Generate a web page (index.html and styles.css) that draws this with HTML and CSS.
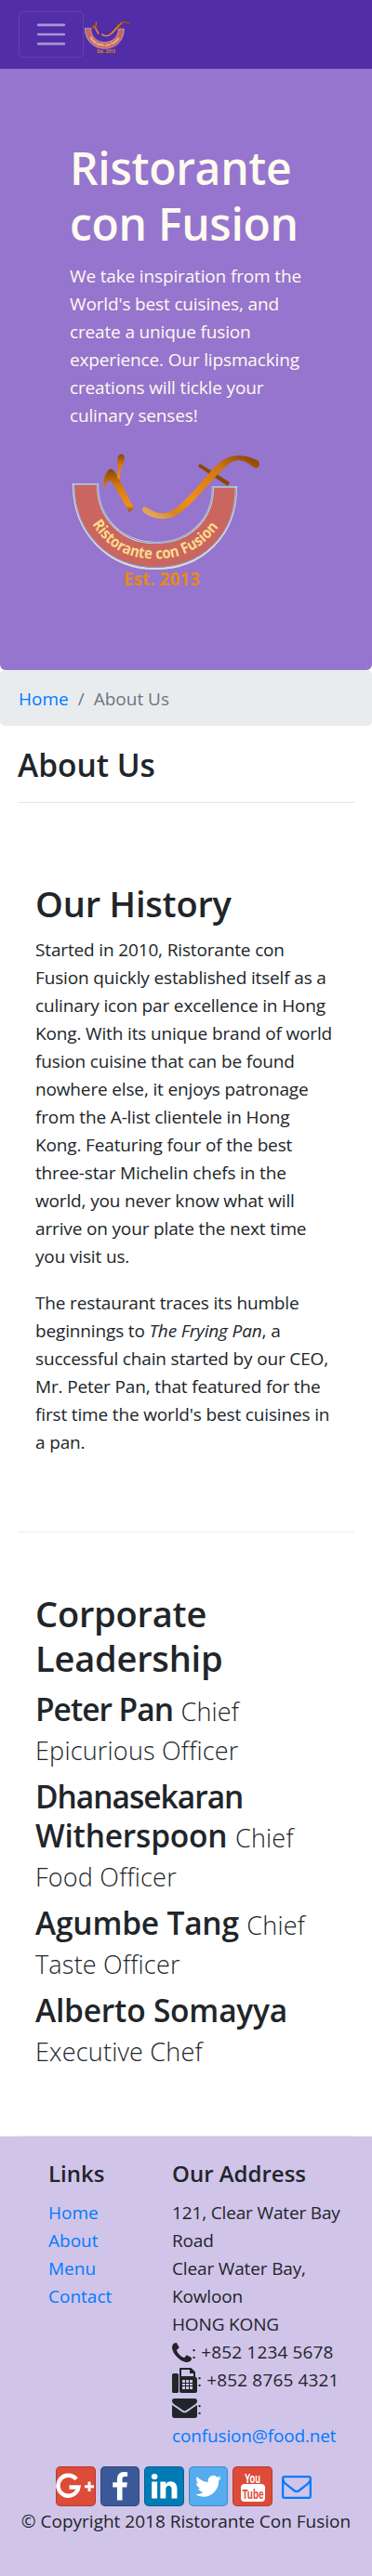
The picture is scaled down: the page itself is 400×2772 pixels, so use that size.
FILE: index.html
```html
<!DOCTYPE html>
<html lang="en">
<head>
<meta charset="utf-8">
<title>Ristorante Con Fusion: About Us</title>
<link rel="stylesheet" href="styles.css">
</head>
<body>
<svg width="0" height="0" class="defs" aria-hidden="true">
  <defs>
    <linearGradient id="gold" x1="0" y1="1" x2="1" y2="0"><stop offset="0" stop-color="#e9bb85"/><stop offset=".18" stop-color="#d9831c"/><stop offset=".35" stop-color="#f09018"/><stop offset=".75" stop-color="#cc7410"/><stop offset="1" stop-color="#7c3f00"/></linearGradient>
    <linearGradient id="amber" x1="0" y1="0" x2="0" y2="1"><stop offset="0" stop-color="#8a4700"/><stop offset=".4" stop-color="#d87a0c"/><stop offset=".85" stop-color="#f09018"/><stop offset="1" stop-color="#8a4a08"/></linearGradient>
    <symbol id="logo" viewBox="0 0 205 150">
      <path d="M4 35H30C30 72 56 98 92 98S154 74 154 38H179C179 91 142 126 92 126S4 88 4 35Z" fill="#cb655f" stroke="#ddd6dc" stroke-width="2.2"/>
      <path d="M4 35H30C30 72 56 98 92 98S154 74 154 38H179" fill="none" stroke="#71a0d2" stroke-width="1"/>
      <path d="M4.500 36C5 88 42 124.500 92 124.500S178 90 179 39" fill="none" stroke="#71a0d2" stroke-width="1"/>
      <path d="M37 40C35 32 38 22 43 19C46 18 48 21 51 26L69 61L64 65L45 32C41 30 39 33 37 40Z" fill="url(#amber)"/>
      <path d="M51 27C53 16 50 9 52 5C55 1 59 3 59 7C58 13 53 19 54 33Z" fill="url(#amber)"/>
      <path d="M138 16L140 13L172 33L170 37Z" fill="#8a4700"/>
      <path d="M79 65C77 60 79 58 83 60C91 65 97 68 106 65C122 60 146 25 161 12C174 1 190 3 203 10C205 15 203 19 198 17C190 11 182 6 173 12C157 23 134 57 114 69C101 75 88 72 79 65Z" fill="url(#gold)"/>
      <path id="arc" d="M24 78C40 103 61 115.500 92 115.500S147 102 165 74" fill="none"/>
      <text class="logo-band"><textPath href="#arc" textLength="161" lengthAdjust="spacingAndGlyphs">Ristorante con Fusion</textPath></text>
      <text class="logo-est" x="58" y="144" textLength="82" lengthAdjust="spacingAndGlyphs">Est. 2013</text>
    </symbol>
  </defs>
</svg>

<nav class="navbar">
  <button class="toggler" aria-label="Menu">
    <svg width="38" height="38" viewBox="0 0 30 30"><path d="M4 7h22M4 15h22M4 23h22" stroke="rgba(255,255,255,.5)" stroke-width="2" stroke-linecap="round" stroke-miterlimit="10"/></svg>
  </button>
  <svg class="brand" width="50" height="36"><use href="#logo" width="50" height="36"/></svg>
</nav>

<header class="jumbotron">
  <h1>Ristorante<br>con Fusion</h1>
  <p>We take inspiration from the<br>World's best cuisines, and<br>create a unique fusion<br>experience. Our lipsmacking<br>creations will tickle your<br>culinary senses!</p>
  <svg class="hero-logo" width="205" height="150"><use href="#logo" width="205" height="150"/></svg>
</header>

<ol class="breadcrumb">
  <li><a href="#">Home</a></li><li class="slash">/</li><li class="active">About Us</li>
</ol>

<main class="container">
  <h3 class="title">About Us</h3>
  <hr>
  <section class="history">
    <h2>Our History</h2>
    <p class="lead">Started in 2010, Ristorante con<br>Fusion quickly established itself as a<br>culinary icon par excellence in Hong<br>Kong. With its unique brand of world<br>fusion cuisine that can be found<br>nowhere else, it enjoys patronage<br>from the A-list clientele in Hong<br>Kong. Featuring four of the best<br>three-star Michelin chefs in the<br>world, you never know what will<br>arrive on your plate the next time<br>you visit us.</p>
    <p>The restaurant traces its humble<br>beginnings to <em>The Frying Pan</em>, a<br>successful chain started by our CEO,<br>Mr. Peter Pan, that featured for the<br>first time the world's best cuisines in<br>a pan.</p>
  </section>
  <hr class="faint">
  <section class="leaders">
    <h2>Corporate<br>Leadership</h2>
    <h3><span class="tight">Peter Pan</span> <small>Chief<br>Epicurious Officer</small></h3>
    <h3><span class="tight">Dhanasekaran</span><br>Witherspoon <small>Chief<br>Food Officer</small></h3>
    <h3>Agumbe Tang <small>Chief<br>Taste Officer</small></h3>
    <h3>Alberto Somayya<br><small>Executive Chef</small></h3>
  </section>
  <hr class="faint last">
</main>

<footer class="footer">
  <div class="columns">
    <div class="links">
      <h5>Links</h5>
      <ul><li><a href="#">Home</a></li><li><a href="#">About</a></li><li><a href="#">Menu</a></li><li><a href="#">Contact</a></li></ul>
    </div>
    <div class="address">
      <h5>Our Address</h5>
      <address>
        121, Clear Water Bay<br>Road<br>Clear Water Bay,<br>Kowloon<br>HONG KONG<br>
        <span class="row"><svg width="21" height="21" viewBox="192 128 1408 1408"><path fill="currentColor" d="M1600 1240q0 27-10 70.500t-21 68.500q-21 50-122 106-94 51-186 51-27 0-52.500-3.500t-57.500-12.500-47.500-14.500-55.500-20.500-49-18q-98-35-175-83-128-79-264.500-215.500t-215.500-264.500q-48-77-83-175-3-9-18-49t-20.500-55.500-14.500-47.500-12.500-57.500-3.500-52.500q0-92 51-186 56-101 106-122 25-11 68.500-21t70.500-10q14 0 21 3 18 6 53 76 11 19 30 54t35 63.500 31 53.500q3 4 17.500 25t21.500 35.500 7 28.500q0 20-28.500 50t-62 55-62 53-28.500 46q0 9 5 22.500t8.500 20.500 14 24 11.500 19q76 137 174 235t235 174q2 1 19 11.500t24 14 20.500 8.500 22.500 5q18 0 46-28.500t53-62 55-62 50-28.500q14 0 28.500 7t35.500 21.500 25 17.500q25 15 53.500 31t63.500 35 54 30q70 35 76 53 3 7 3 21z"/></svg>: +852 1234 5678</span>
        <span class="row"><svg width="27" height="27" viewBox="0 0 27 27"><path fill="currentColor" fill-rule="evenodd" d="M1.500 6H5.500Q7 6 7 7.500V25.500Q7 27 5.500 27H1.500Q0 27 0 25.500V7.500Q0 6 1.500 6ZM8 1Q8 0 9 0H20.500L25 4.500V9.500Q27 10.500 27 12V25Q27 27 25 27H10Q8 27 8 25ZM10 2V9H23V6H19V2ZM11 13V16H14V13ZM15 13V16H18V13ZM19 13V16H22V13ZM11 17V19H14V17ZM15 17V19H18V17ZM19 17V19H22V17ZM11 20V23H14V20ZM15 20V23H18V20ZM19 20V23H22V20Z"/></svg>: +852 8765 4321</span>
        <span class="row mail"><svg width="27" height="21" viewBox="0 256 1792 1408" preserveAspectRatio="none"><path fill="currentColor" d="M1792 710v794q0 66-47 113t-113 47h-1472q-66 0-113-47t-47-113v-794q44 49 101 87 362 246 497 345 57 42 92.500 65.500t94.500 48 110 24.500h2q51 0 110-24.500t94.500-48 92.500-65.500q170-123 498-345 57-39 100-87zm0-294q0 79-49 151t-122 123q-376 261-468 325-10 7-42.500 31t-54 38.500-52 32.500-57.500 27-50 9h-2q-23 0-50-9t-57.500-27-52-32.500-54-38.500-42.500-31q-91-64-262-182.500t-205-142.500q-62-42-117-115.500t-55-136.500q0-78 41.500-130t118.500-52h1472q65 0 112.500 47t47.500 113z"/></svg>:</span>
        <a href="#">confusion@food.net</a>
      </address>
    </div>
  </div>
  <div class="social">
    <a class="btn google" href="#"><svg width="43" height="43" viewBox="0 0 43 43"><path d="M22 13.800A11 11 0 1 0 24.300 22.500H14.500" fill="none" stroke="#fff" stroke-width="4.500"/><path d="M36 16.500V27M31 21.800H41" stroke="#fff" stroke-width="3" fill="none"/></svg></a>
    <a class="btn facebook" href="#"><svg width="42" height="43" viewBox="0 0 42 43"><path fill="#fff" transform="translate(4.500 6) scale(.0183)" d="M1343 12v264h-157q-86 0-116 36t-30 108v189h293l-39 296h-254v759h-306v-759h-255v-296h255v-218q0-186 104-288.500t277-102.500q147 0 228 12z"/></svg></a>
    <a class="btn linkedin" href="#"><svg width="43" height="43" viewBox="0 0 43 43"><path fill="#fff" transform="translate(5.500 5.300) scale(.0180)" d="M477 625v991h-330v-991h330zm21-306q1 73-50.500 122t-135.500 49h-2q-82 0-132-49t-50-122q0-74 51.500-122.500t134.500-48.500 133 48.500 51 122.500zm1166 729v568h-329v-530q0-105-40.500-164.500t-126.500-59.500q-63 0-105.500 34.500t-63.500 85.500q-11 30-11 81v553h-329q2-399 2-647t-1-296l-1-48h329v144h-2q20-32 41-56t56.500-52 87-43.500 114.500-15.500q171 0 275 113.500t104 332.500z"/></svg></a>
    <a class="btn twitter" href="#"><svg width="42" height="43" viewBox="0 0 42 43"><path fill="#fff" transform="translate(5 5.300) scale(.0178)" d="M1684 408q-67 98-162 167 1 14 1 42 0 130-38 259.500t-115.500 248.500-184.500 210.500-258 146-323 54.500q-271 0-496-145 35 4 78 4 225 0 401-138-105-2-188-64.500t-114-159.500q33 5 61 5 43 0 85-11-112-23-185.500-111.500t-73.500-205.500v-4q68 38 146 41-66-44-105-115t-39-154q0-88 44-163 121 149 294.500 238.500t371.500 99.500q-8-38-8-74 0-134 94.500-228.500t228.500-94.500q140 0 236 102 109-21 205-78-37 115-142 178 93-10 186-50z"/></svg></a>
    <a class="btn youtube" href="#"><svg width="43" height="43" viewBox="0 0 43 43"><rect x="9" y="19" width="26" height="19" rx="4" fill="#fff"/><text class="yt" x="13" y="18" fill="#fff" textLength="17" lengthAdjust="spacingAndGlyphs">You</text><text class="yt" x="10.500" y="34.500" fill="#dd4b39" textLength="23" lengthAdjust="spacingAndGlyphs">Tube</text></svg></a>
    <a class="envelope" href="#"><svg width="32" height="25" viewBox="0 256 1792 1408" preserveAspectRatio="none"><path fill="currentColor" d="M1664 1504v-768q-32 36-69 66-268 206-426 338-51 43-83 67t-86.500 48.500-102.500 24.500h-2q-48 0-102.500-24.500t-86.500-48.500-83-67q-158-132-426-338-37-30-69-66v768q0 13 9.500 22.500t22.500 9.500h1472q13 0 22.500-9.500t9.500-22.500zm0-1051v-24.500l-.5-13-3-12.500-5.500-9-9-7.500-14-2.500h-1472q-13 0-22.500 9.500t-9.500 22.500q0 168 147 284 193 152 401 317 6 5 35 29.500t46 37.500 44.500 31.500 50.500 27.500 43 9h2q20 0 43-9t50.500-27.500 44.500-31.500 46-37.500 35-29.500q208-165 401-317 54-43 100.500-115.500t46.500-131.500zm128-37v1088q0 66-47 113t-113 47h-1472q-66 0-113-47t-47-113v-1088q0-66 47-113t113-47h1472q66 0 113 47t47 113z"/></svg></a>
  </div>
  <p class="copyright">© Copyright 2018 Ristorante Con Fusion</p>
</footer>
</body>
</html>
```
FILE: styles.css
```css
* { box-sizing: border-box; }
body {
  margin: 0;
  background: #fff;
  color: #212529;
  font: 19px/30px "Open Sans", "Noto Sans", sans-serif;
}
h1, h2, h3, h5, p, ul, ol { margin: 0; padding: 0; font-weight: 600; }
p { font-weight: 400; }
ul, ol { list-style: none; font-weight: 400; }
a { color: #007bff; text-decoration: none; }
svg { display: block; }
.defs { position: absolute; }
h1 { font-size: 48px; line-height: 60px; letter-spacing: -.3px; }
h2 { font-size: 38px; line-height: 48px; letter-spacing: -.2px; }
h3 { font-size: 33.500px; line-height: 42px; }
h5 { font-size: 24px; line-height: 30px; }
h3 small { font-size: 27px; font-weight: 300; line-height: 1; letter-spacing: .2px; }

.navbar { display: flex; align-items: center; height: 74px; padding: 0 20px; background: #512da8; }
.toggler {
  display: flex;
  align-items: center;
  justify-content: center;
  width: 70px;
  height: 50px;
  padding: 0;
  background: none;
  border: 1px solid rgba(255, 255, 255, .1);
  border-radius: 5px;
}
.brand { margin-top: 5px; }

.jumbotron {
  height: 647px;
  padding: 77px 75px 0;
  background: #9575cd;
  color: floralwhite;
  border-radius: 0 0 6px 6px;
  white-space: nowrap;
}
.jumbotron p { margin-top: 11px; letter-spacing: -.15px; }
.hero-logo { margin-top: 24px; }
.logo-band { font: 700 16.500px "Open Sans", sans-serif; fill: #fbdc8c; }
.logo-est { font: 700 19px "Open Sans", sans-serif; fill: #e58a17; }

.breadcrumb {
  display: flex;
  height: 60px;
  padding: 16px 20px;
  background: #e9ecef;
  color: #6c757d;
  border-radius: 5px;
}
.slash { padding: 0 10px; }

.container { padding: 0 19px; white-space: nowrap; }
hr { height: 1px; margin: 0; border: 0; background: #e5e5e5; }
.faint { background: #ececec; }
.title { padding-top: 21px; height: 82px; }
.history { height: 784px; padding: 84px 19px 0; }
.history p { margin-top: 20px; letter-spacing: -.15px; }
.history .lead { margin-top: 11px; }
.leaders { height: 649px; padding: 63px 19px 0; }
.leaders h2 { margin-bottom: 10px; }
.leaders h3 { margin-bottom: 10px; letter-spacing: -.2px; }
.leaders .tight { letter-spacing: -1px; }

.footer { height: 473px; padding-top: 25px; background: #d1c4e9; white-space: nowrap; }
.columns { display: grid; grid-template-columns: 133px 1fr; padding-left: 52px; }
.columns h5 { margin: 0 0 12px; }
address { font-style: normal; letter-spacing: -.15px; }
.row { display: flex; align-items: center; height: 30px; letter-spacing: .15px; }
.social { display: flex; gap: 5px; margin: 18px 0 1px 60px; }
.btn { border-radius: 5px; box-shadow: inset 0 0 0 1px rgba(0, 0, 0, .2); }
.google, .youtube { background: #dd4b39; }
.facebook { background: #3b5998; }
.linkedin { background: #007bb6; }
.twitter { background: #55acee; }
.envelope { padding: 10px 0 0 5px; }
.yt { font: 700 14px "Liberation Sans", sans-serif; }
.copyright { text-align: center; }
```
